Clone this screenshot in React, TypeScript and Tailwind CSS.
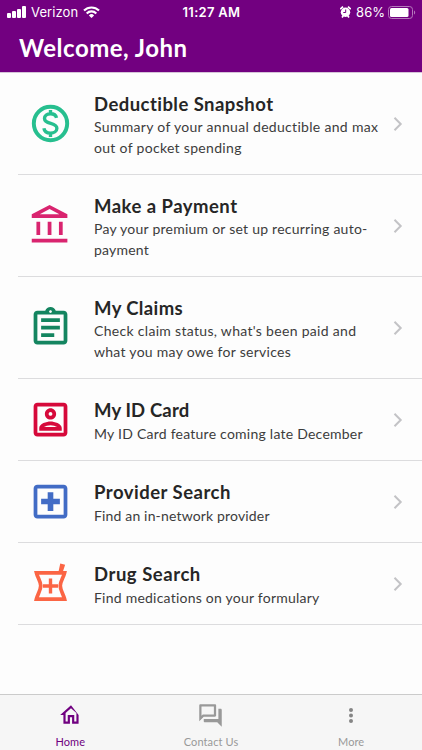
import React from 'react';
import clsx from 'clsx';

interface MenuItem {
  title: string;
  titleClass: string;
  lines: { text: string; className: string }[];
  color: string;
  icon: React.ReactNode;
}

const DollarIcon = () => (
  <>
    <circle cx="12" cy="12" r="8.9" fill="none" stroke="currentColor" strokeWidth="2.1" />
    <path
      d="M15.2 9C14.9 7.6 13.7 6.8 12 6.8c-1.900 0-3.200 1-3.200 2.500 0 3.400 6.600 1.900 6.600 5.200 0 1.600-1.500 2.600-3.400 2.600-2 0-3.300-1-3.500-2.600M12 4.800v2.200M12 17V19.200"
      fill="none"
      stroke="currentColor"
      strokeWidth="1.8"
    />
  </>
);

const BankIcon = () => (
  <path d="M6.5 10h-2v7h2v-7zm6 0h-2v7h2v-7zm8.5 9H2v2h19v-2zm-2.5-9h-2v7h2v-7zm-7-6.74L16.71 6H6.29l5.21-2.74m0-2.26L2 6v2h19V6l-9.5-5z" />
);

const ClipboardIcon = () => (
  <path d="M7 15h7v2H7zm0-4h10v2H7zm0-4h10v2H7zm12-4h-4.18C14.4 1.84 13.3 1 12 1c-1.3 0-2.4.84-2.82 2H5c-1.1 0-2 .9-2 2v14c0 1.1.9 2 2 2h14c1.1 0 2-.9 2-2V5c0-1.1-.9-2-2-2zm-7-.25c.41 0 .75.34.75.75s-.34.75-.75.75-.75-.34-.75-.75.34-.75.75-.75zM19 19H5V5h14v14z" />
);

const IdCardIcon = () => (
  <path d="M19 3H5c-1.1 0-2 .9-2 2v14c0 1.1.9 2 2 2h14c1.1 0 2-.9 2-2V5c0-1.1-.9-2-2-2zm0 16H5V5h14v14zm-7-7c1.65 0 3-1.35 3-3s-1.35-3-3-3-3 1.35-3 3 1.35 3 3 3zm0-4c.55 0 1 .45 1 1s-.45 1-1 1-1-.45-1-1 .45-1 1-1zm6 8.58c0-2.5-3.97-3.58-6-3.58s-6 1.08-6 3.58V18h12v-1.42zM8.48 16c.74-.51 2.23-1 3.52-1s2.78.49 3.52 1H8.48z" />
);

const HospitalIcon = () => (
  <path d="M19 3H5c-1.1 0-2 .9-2 2v14c0 1.1.9 2 2 2h14c1.1 0 2-.9 2-2V5c0-1.1-.9-2-2-2zm0 16H5V5h14v14zm-8.5-2h3v-3.5H17v-3h-3.5V7h-3v3.5H7v3h3.5z" />
);

const MortarIcon = () => (
  <>
    <path
      d="M4.5 6.3h15c-.6 2.600-2.300 4.500-2.300 6.900s1.700 4.600 2.300 7.100h-15c.6-2.500 2.300-4.700 2.300-7.100S5.100 8.900 4.500 6.300z"
      fill="none"
      stroke="currentColor"
      strokeWidth="2"
    />
    <path d="M16.200 6l1-4.700 2.600.7-1.300 4zM11.100 9.300h1.800v3.100h3.100v1.800h-3.100v3.100h-1.800v-3.100H8v-1.800h3.100z" />
  </>
);

const ITEMS: MenuItem[] = [
  {
    title: 'Deductible Snapshot',
    titleClass: 'tracking-[0.45px]',
    lines: [
      { text: 'Summary of your annual deductible and max', className: 'tracking-[0.31px]' },
      { text: 'out of pocket spending', className: 'tracking-[0.31px]' },
    ],
    color: 'text-[#27bf8f]',
    icon: <DollarIcon />,
  },
  {
    title: 'Make a Payment',
    titleClass: 'tracking-[0.47px]',
    lines: [
      { text: 'Pay your premium or set up recurring auto-', className: 'tracking-[0.24px]' },
      { text: 'payment', className: 'tracking-[0.2px]' },
    ],
    color: 'text-[#d9246f]',
    icon: <BankIcon />,
  },
  {
    title: 'My Claims',
    titleClass: 'tracking-[0.38px]',
    lines: [
      { text: "Check claim status, what's been paid and", className: 'tracking-[0.31px]' },
      { text: 'what you may owe for services', className: 'tracking-[0.28px]' },
    ],
    color: 'text-[#148560]',
    icon: <ClipboardIcon />,
  },
  {
    title: 'My ID Card',
    titleClass: 'tracking-[0.14px]',
    lines: [{ text: 'My ID Card feature coming late December', className: 'tracking-[0.24px]' }],
    color: 'text-[#d6093a]',
    icon: <IdCardIcon />,
  },
  {
    title: 'Provider Search',
    titleClass: 'tracking-[0.49px]',
    lines: [{ text: 'Find an in-network provider', className: 'tracking-[0.16px]' }],
    color: 'text-[#426cc5]',
    icon: <HospitalIcon />,
  },
  {
    title: 'Drug Search',
    titleClass: 'tracking-[0.54px]',
    lines: [{ text: 'Find medications on your formulary', className: 'tracking-[0.23px]' }],
    color: 'text-[#fb6544]',
    icon: <MortarIcon />,
  },
];

const StatusBar = () => (
  <div className="grid h-6 grid-cols-3 items-center pl-[7px] pr-[6px] font-['Inter'] text-white">
    <div className="flex items-center">
      <div className="flex h-3 items-end gap-px">
        <span className="h-[5px] w-1 rounded-[1px] bg-white" />
        <span className="h-[7px] w-1 rounded-[1px] bg-white" />
        <span className="h-[9px] w-1 rounded-[1px] bg-white" />
        <span className="h-3 w-1 rounded-[1px] bg-white" />
      </div>
      <span className="ml-[5px] text-[13px] leading-6 tracking-[0.1px]">Verizon</span>
      <svg width="17" height="12" viewBox="0 0 17 12" className="ml-[5px]" fill="none" stroke="white" strokeWidth="2.1">
        <path d="M1 4.6a10.6 10.6 0 0 1 15 0M3.7 7.4a6.8 6.8 0 0 1 9.6 0" />
        <path d="M8.5 12L5.9 9.4a3.7 3.7 0 0 1 5.2 0z" fill="white" stroke="none" />
      </svg>
    </div>
    <div className="text-center text-[13px] font-semibold leading-6 tracking-[0.3px]">11:27 AM</div>
    <div className="flex items-center justify-end">
      <svg width="11" height="12" viewBox="0 0 11 12">
        <circle cx="5.5" cy="6.2" r="4.7" fill="white" />
        <path d="M.3 3.2L3 .6M10.7 3.2L8 .6M2 11.5l1.3-1.7M9 11.5L7.7 9.8" stroke="white" strokeWidth="1.7" />
        <path d="M5.7 3.5v3H3.3" fill="none" stroke="#720080" strokeWidth="1" />
      </svg>
      <span className="ml-[5px] text-[13px] leading-6">86%</span>
      <svg width="28" height="13" viewBox="0 0 28 13" className="ml-[3px]">
        <rect x=".5" y=".5" width="24" height="12" rx="3" fill="none" stroke="#b478bb" />
        <rect x="2" y="2" width="18.5" height="9" rx="1.5" fill="white" />
        <path d="M26 4.5c1.6.6 1.6 3.4 0 4z" fill="#b478bb" />
      </svg>
    </div>
  </div>
);

const MenuRow: React.FC<{ item: MenuItem }> = ({ item }) => (
  <li
    className={clsx(
      'flex items-center border-b border-[#dcdcde] pl-[10px] pr-[18px]',
      item.lines.length > 1 ? 'h-[102px]' : 'h-[82px]'
    )}
  >
    <svg width="45" height="45" viewBox="0 0 24 24" fill="currentColor" className={clsx('shrink-0', item.color)}>
      {item.icon}
    </svg>
    <div className="ml-[21px] w-0 flex-1 whitespace-nowrap pt-[3px]">
      <h2 className={clsx('mb-[1.5px] text-[18.5px] leading-6 font-bold text-[#262626]', item.titleClass)}>
        {item.title}
      </h2>
      {item.lines.map((line) => (
        <p key={line.text} className="text-sm leading-[20.5px] text-[#3c3c3c]">
          <span className={line.className}>{line.text}</span>
        </p>
      ))}
    </div>
    <svg width="12" height="16" viewBox="0 0 12 16" className="shrink-0" fill="none" stroke="#c3c3c6" strokeWidth="2">
      <path d="M2.5 1.8L8.7 8l-6.2 6.2" />
    </svg>
  </li>
);

const TabBar = () => (
  <nav className="grid h-14 grid-cols-3 border-t border-[#cbcbcb] bg-[#f6f6f6] text-[11px] tracking-[0.1px] text-[#999999]">
    <div className="flex flex-col items-center text-[#700080]">
      <svg width="26" height="26" viewBox="0 0 24 24" fill="currentColor" className="ml-px mt-[7px]">
        <path d="M12 5.69l5 4.5V18h-2v-6H9v6H7v-7.81l5-4.5M12 3L2 12h3v8h6v-6h2v6h6v-8L12 3z" />
      </svg>
      <span className="mt-[6px] leading-4">Home</span>
    </div>
    <div className="flex flex-col items-center">
      <svg width="27" height="27" viewBox="0 0 24 24" fill="currentColor" className="mt-[7px]">
        <path d="M15 4v7H5.17L4 12.17V4h11m1-2H3c-.55 0-1 .45-1 1v14l4-4h10c.55 0 1-.45 1-1V3c0-.55-.45-1-1-1zm5 4h-2v9H6v2c0 .55.45 1 1 1h11l4 4V7c0-.55-.45-1-1-1z" />
      </svg>
      <span className="mt-[5px] leading-4">Contact Us</span>
    </div>
    <div className="flex flex-col items-center pr-px">
      <svg width="24" height="24" viewBox="0 0 24 24" fill="#858585" className="mt-[9px]">
        <circle cx="12" cy="6" r="2" />
        <circle cx="12" cy="11.5" r="2" />
        <circle cx="12" cy="17" r="2" />
      </svg>
      <span className="mt-[6px] leading-4">More</span>
    </div>
  </nav>
);

const App: React.FC = () => {
  return (
    <div className="flex h-[750px] w-[422px] flex-col overflow-hidden bg-[#fdfdfd] font-['Lato',sans-serif]">
      <header className="h-[73px] border-b border-[#d5c3d8] bg-[#720080]">
        <StatusBar />
        <h1 className="pl-[19px] text-2xl leading-[48px] font-bold text-white">
          <span className="tracking-[0.5px]">Welcome, John</span>
        </h1>
      </header>
      <main className="flex-1">
        <ul className="ml-[18px]">
          {ITEMS.map((item) => (
            <MenuRow key={item.title} item={item} />
          ))}
        </ul>
      </main>
      <TabBar />
    </div>
  );
};

export default App;
